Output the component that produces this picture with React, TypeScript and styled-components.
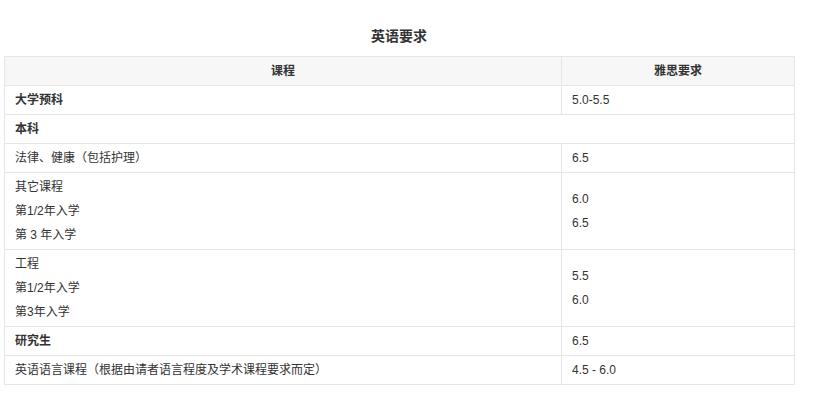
import styled, { createGlobalStyle } from "styled-components";

const GlobalStyle = createGlobalStyle`
  body {
    margin: 0;
    background: #ffffff;
    font-family: "Liberation Sans", "Noto Sans CJK SC", sans-serif;
    color: #333333;
  }
`;

const Page = styled.div`
  padding: 24px 19px 0 4px;
  width: 790px;
`;

const Title = styled.h3`
  margin: 0 0 8px;
  font-size: 14px;
  line-height: 24px;
  font-weight: bold;
  text-align: center;
  color: #333333;
`;

const Table = styled.table`
  width: 790px;
  border-collapse: collapse;
  table-layout: fixed;
  font-size: 12px;
  line-height: 24px;
`;

const HeadCell = styled.th`
  background: #f7f7f7;
  border: 1px solid #e6e6e6;
  padding: 2px 10px;
  font-weight: bold;
  text-align: center;
  height: 24px;
`;

const Cell = styled.td<{ $bold?: boolean }>`
  border: 1px solid #e6e6e6;
  padding: 2px 10px;
  vertical-align: middle;
  font-weight: ${(p) => (p.$bold ? "bold" : "normal")};
`;

const Line = styled.div`
  line-height: 24px;
`;

type Row = { course: string[]; score: string[]; bold?: boolean; span?: boolean };

const rows: Row[] = [
  { course: ["大学预科"], score: ["5.0-5.5"], bold: true },
  { course: ["本科"], score: [], bold: true, span: true },
  { course: ["法律、健康（包括护理）"], score: ["6.5"] },
  { course: ["其它课程", "第1/2年入学", "第 3 年入学"], score: ["6.0", "6.5"] },
  { course: ["工程", "第1/2年入学", "第3年入学"], score: ["5.5", "6.0"] },
  { course: ["研究生"], score: ["6.5"], bold: true },
  { course: ["英语语言课程（根据由请者语言程度及学术课程要求而定）"], score: ["4.5 - 6.0"] },
];

export default function App() {
  return (
    <>
      <GlobalStyle />
      <Page>
        <Title>英语要求</Title>
        <Table>
          <colgroup>
            <col style={{ width: 557 }} />
            <col style={{ width: 233 }} />
          </colgroup>
          <thead>
            <tr>
              <HeadCell>课程</HeadCell>
              <HeadCell>雅思要求</HeadCell>
            </tr>
          </thead>
          <tbody>
            {rows.map((r, i) =>
              r.span ? (
                <tr key={i}>
                  <Cell $bold colSpan={2}>
                    {r.course[0]}
                  </Cell>
                </tr>
              ) : (
                <tr key={i}>
                  <Cell $bold={r.bold}>
                    {r.course.map((c) => (
                      <Line key={c}>{c}</Line>
                    ))}
                  </Cell>
                  <Cell>
                    {r.score.map((s) => (
                      <Line key={s}>{s}</Line>
                    ))}
                  </Cell>
                </tr>
              )
            )}
          </tbody>
        </Table>
      </Page>
    </>
  );
}
